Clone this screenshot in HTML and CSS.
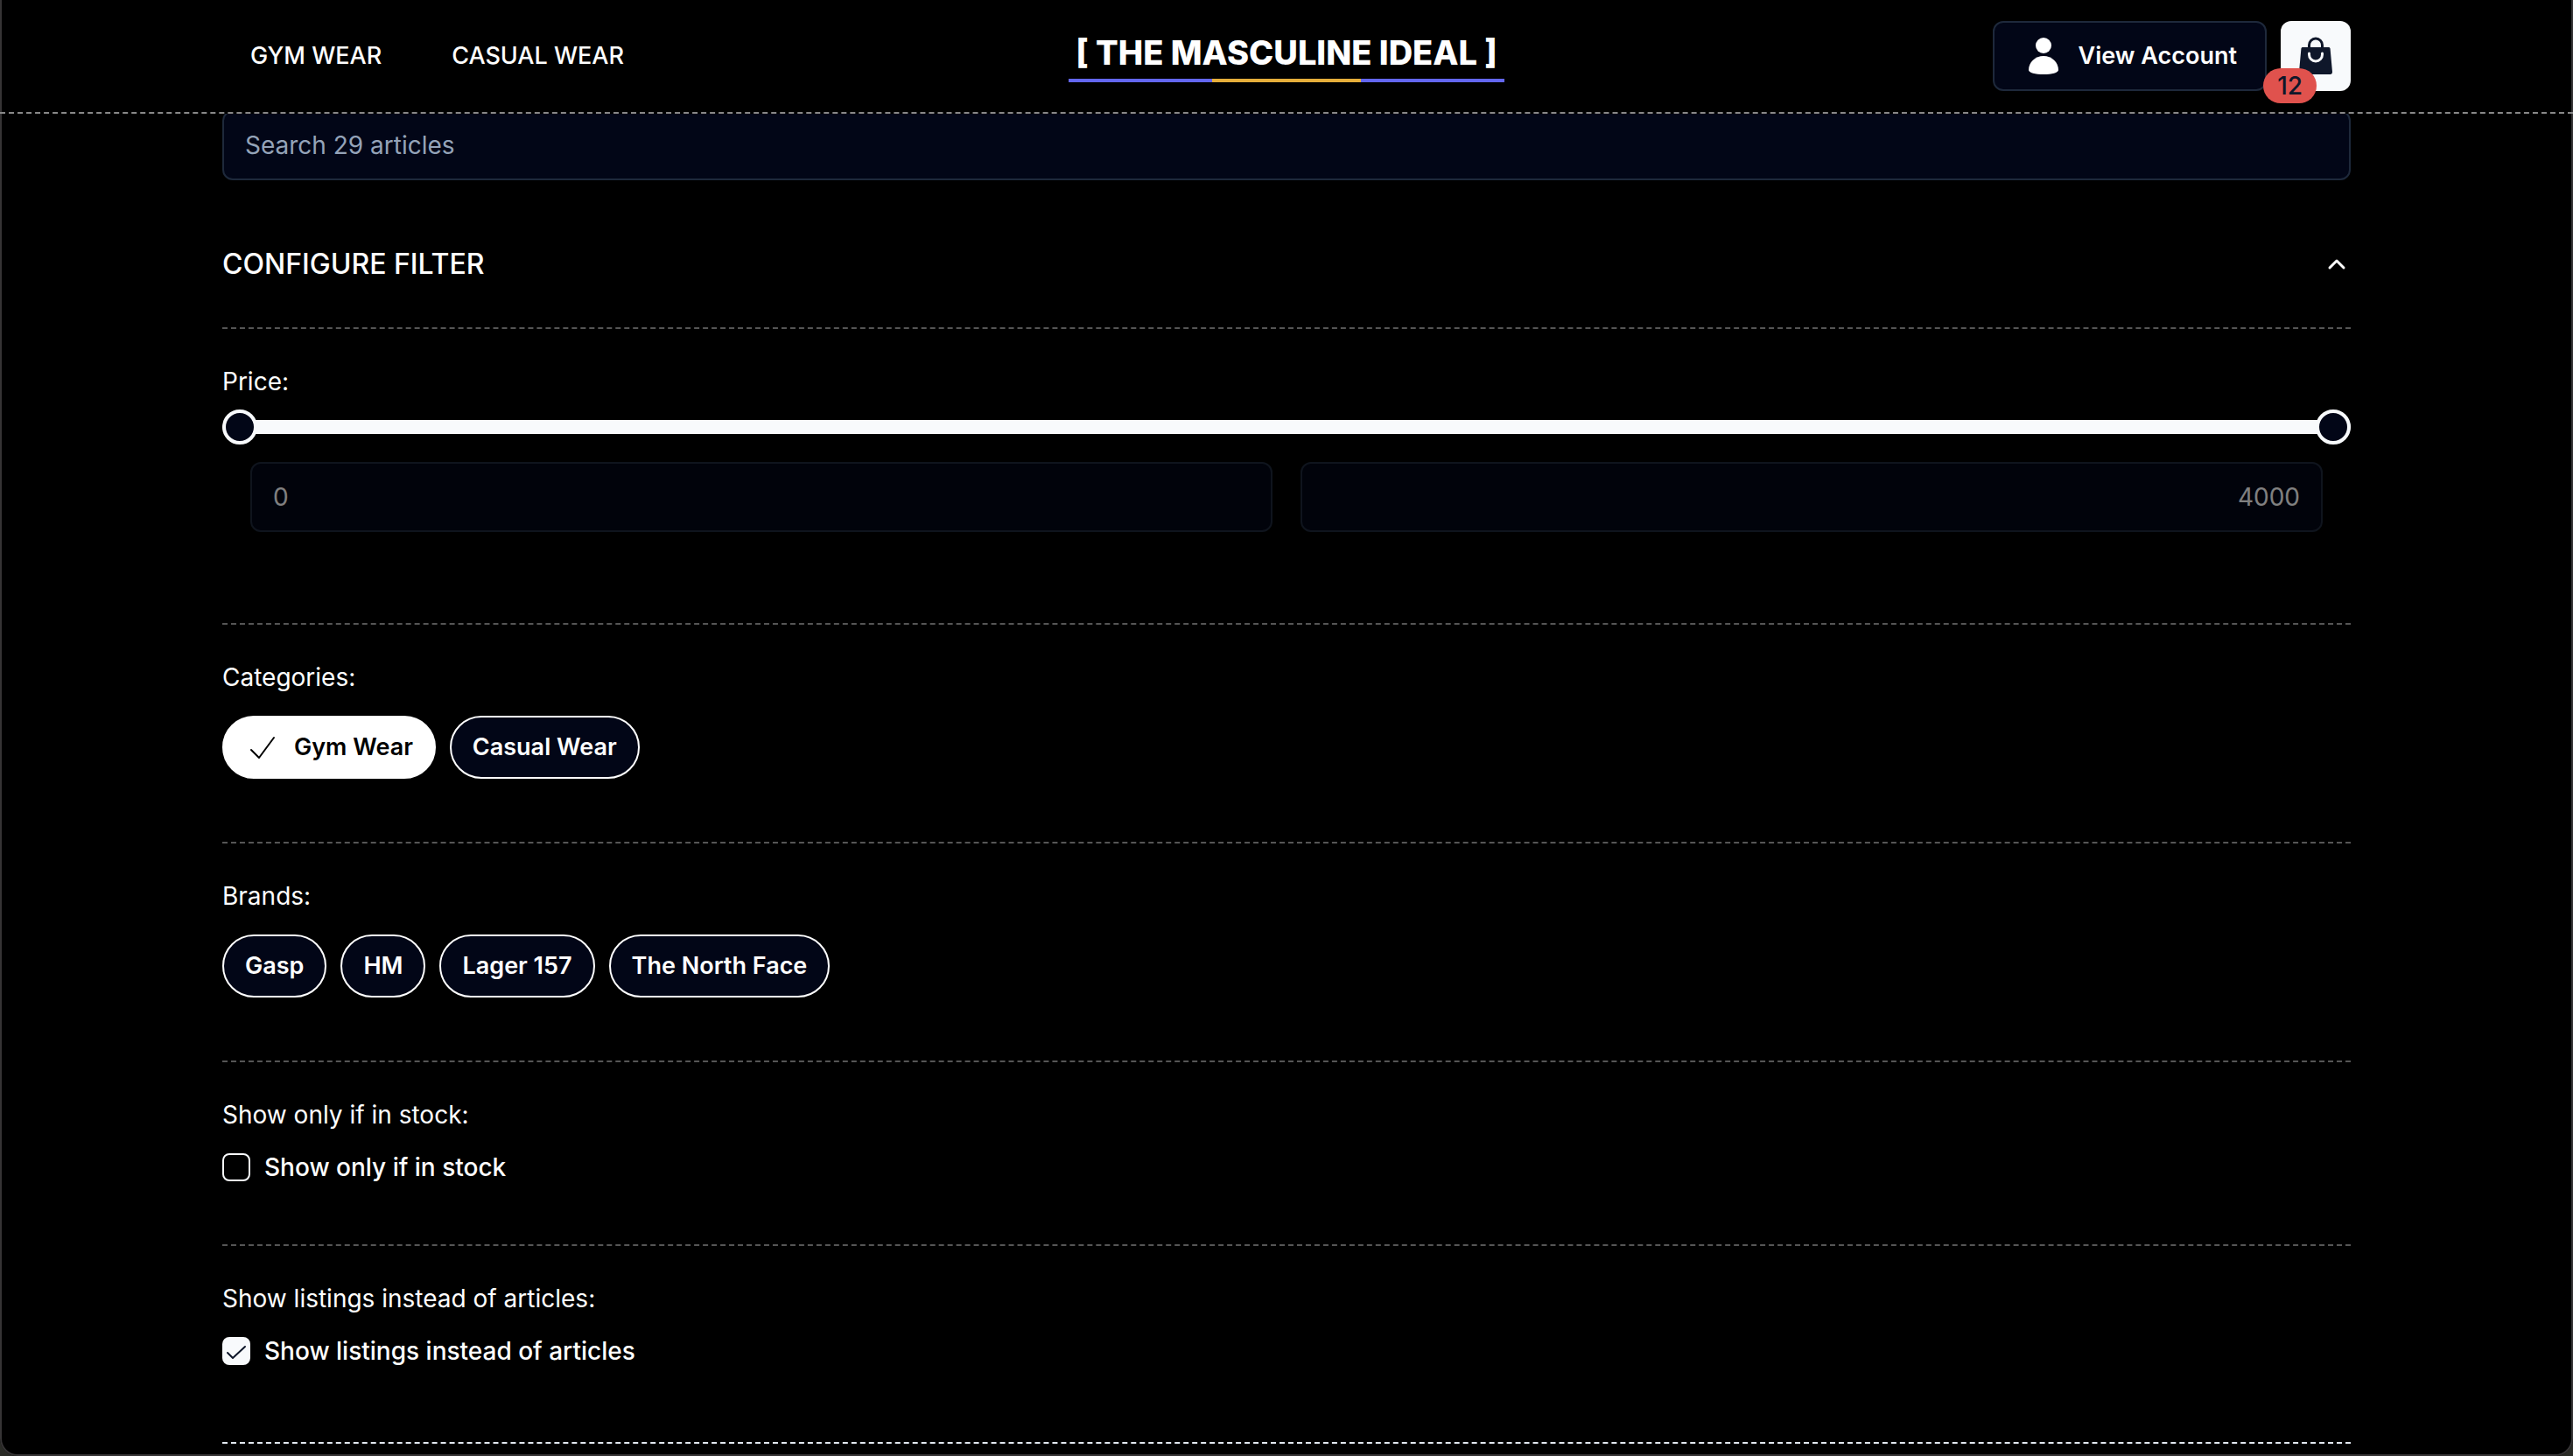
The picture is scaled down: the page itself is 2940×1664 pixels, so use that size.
FILE: index.html
```html
<!DOCTYPE html>
<html lang="en">
<head>
<meta charset="utf-8">
<meta name="viewport" content="width=device-width, initial-scale=1">
<title>The Masculine Ideal</title>
<link rel="stylesheet" href="styles.css">
</head>
<body>
<header class="site-header">
  <div class="container header-row">
    <nav class="nav">
      <a href="#gym">GYM WEAR</a>
      <a href="#casual">CASUAL WEAR</a>
    </nav>
    <a class="brand" href="#home">[ THE MASCULINE IDEAL ]</a>
    <div class="actions">
      <button class="account" type="button">
        <svg class="icon" viewBox="0 0 48 48" fill="currentColor" aria-hidden="true"><circle cx="24" cy="12" r="9"/><path d="M24 24c9.500 0 17 7.200 17 16 0 3-7.500 5-17 5S7 43 7 40c0-8.800 7.500-16 17-16z"/></svg>
        View Account
      </button>
      <button class="bag" type="button" aria-label="Shopping bag, 12 items">
        <svg class="icon" viewBox="0 0 48 48" fill="none" aria-hidden="true"><path d="M9.300 14h29.400c1 0 1.800.700 1.900 1.700L43 42c.1 1.700-.9 3-2.500 3h-33C5.900 45 4.900 43.700 5 42l2.400-26.300c.1-1 .9-1.700 1.900-1.700z" fill="currentColor"/><path d="M16.500 15v-3.500a7.500 7.500 0 0 1 15 0V15" stroke="currentColor" stroke-width="3"/><path d="M16.500 21v1.500a7.500 7.500 0 0 0 15 0V21" stroke="#f8fafc" stroke-width="3" stroke-linecap="round"/></svg>
        <span class="badge">12</span>
      </button>
    </div>
  </div>
</header>

<main class="container">
  <input class="field search" type="search" placeholder="Search 29 articles" aria-label="Search articles">

  <button class="filter-toggle" type="button" aria-expanded="true" aria-controls="filters">
    CONFIGURE FILTER
    <svg class="chevron" viewBox="0 0 32 32" fill="none" stroke="currentColor" stroke-width="3" stroke-linecap="round" stroke-linejoin="round" aria-hidden="true"><path d="M8 20l8-8 8 8"/></svg>
  </button>

  <div id="filters" class="filters">
    <section class="group group-price">
      <h2 class="label">Price:</h2>
      <div class="slider">
        <div class="track"></div>
        <input class="range" type="range" min="0" max="4000" value="0" aria-label="Minimum price">
        <input class="range" type="range" min="0" max="4000" value="4000" aria-label="Maximum price">
      </div>
      <div class="price-fields">
        <input class="field" type="text" value="0" aria-label="Minimum price value" disabled>
        <input class="field field-end" type="text" value="4000" aria-label="Maximum price value" disabled>
      </div>
    </section>

    <section class="group">
      <h2 class="label">Categories:</h2>
      <div class="chips">
        <button class="chip chip-on" type="button" aria-pressed="true">
          <svg class="chip-check" viewBox="0 0 40 40" fill="none" stroke="currentColor" stroke-width="2" stroke-linecap="round" stroke-linejoin="round" aria-hidden="true"><path d="M7 23l9 9L33 9"/></svg>
          Gym Wear
        </button>
        <button class="chip" type="button" aria-pressed="false">Casual Wear</button>
      </div>
    </section>

    <section class="group">
      <h2 class="label">Brands:</h2>
      <div class="chips">
        <button class="chip" type="button" aria-pressed="false">Gasp</button>
        <button class="chip" type="button" aria-pressed="false">HM</button>
        <button class="chip" type="button" aria-pressed="false">Lager 157</button>
        <button class="chip" type="button" aria-pressed="false">The North Face</button>
      </div>
    </section>

    <section class="group">
      <h2 class="label">Show only if in stock:</h2>
      <label class="check">
        <span class="tick"><input type="checkbox"><svg viewBox="0 0 32 32" fill="none" stroke="currentColor" stroke-width="2" stroke-linecap="round" stroke-linejoin="round" aria-hidden="true"><path d="M6 18l6 6 14-13"/></svg></span>
        Show only if in stock
      </label>
    </section>

    <section class="group">
      <h2 class="label">Show listings instead of articles:</h2>
      <label class="check">
        <span class="tick"><input type="checkbox" checked><svg viewBox="0 0 32 32" fill="none" stroke="currentColor" stroke-width="2" stroke-linecap="round" stroke-linejoin="round" aria-hidden="true"><path d="M6 18l6 6 14-13"/></svg></span>
        Show listings instead of articles
      </label>
    </section>
  </div>
</main>
</body>
</html>
```

FILE: styles.css
```css
* {
  box-sizing: border-box;
}

body {
  margin: 0;
  min-height: 100vh;
  background: #000;
  color: #fff;
  font-family: Inter, "Liberation Sans", sans-serif;
  font-size: 28px;
  line-height: 40px;
}

/* rounded outline of the app window */
body::after {
  content: "";
  position: fixed;
  inset: 0;
  border: 2px solid #363435;
  border-top: 0;
  border-radius: 0 0 20px 20px;
  box-shadow: 0 0 0 20px #2a2b26;
  pointer-events: none;
  z-index: 1;
}

button,
input {
  font: inherit;
  color: inherit;
  margin: 0;
}

button {
  cursor: pointer;
}

a {
  color: inherit;
  text-decoration: none;
}

.container {
  max-width: 2432px;
  margin: 0 auto;
}

.site-header {
  position: sticky;
  top: 0;
  z-index: 2;
  background: #000;
  border-bottom: 2px dashed #888;
  box-shadow: inset 2px 0 #363435, inset -2px 0 #363435;
}

.header-row {
  display: grid;
  grid-template-columns: 1fr auto 1fr;
  align-items: center;
  min-height: 128px;
}

.nav {
  display: flex;
  gap: 80px;
  padding-left: 32px;
  font-size: 27px;
  font-weight: 500;
}

.brand {
  padding: 6px 8px 10px;
  border-bottom: 4px solid;
  border-image: linear-gradient(90deg, #6366f1 33.300%, #e5ae3b 33.300% 66.700%, #6366f1 66.700%) 4;
  font-size: 38px;
  font-weight: 800;
}

.actions {
  display: flex;
  justify-content: flex-end;
  gap: 16px;
}

.icon {
  width: 48px;
  height: 48px;
}

.account {
  display: flex;
  align-items: center;
  gap: 16px;
  height: 80px;
  padding: 0 32px;
  border: 2px solid #1e293b;
  border-radius: 12px;
  background: #020617;
  font-size: 27px;
  font-weight: 600;
}

.bag {
  position: relative;
  display: grid;
  place-items: center;
  width: 80px;
  height: 80px;
  padding: 0;
  border: 0;
  border-radius: 12px;
  background: #f8fafc;
  color: #0f172a;
}

.badge {
  position: absolute;
  right: 39px;
  bottom: -14px;
  padding: 0 16px;
  border-radius: 20px;
  background: #e0524d;
  font-weight: 500;
}

.field {
  display: block;
  width: 100%;
  height: 80px;
  padding: 0 24px;
  border: 2px solid #1e293b;
  border-radius: 12px;
  background: #020617;
  appearance: none;
}

.field:disabled {
  opacity: 0.5;
}

.field-end {
  text-align: right;
}

.search {
  margin-top: -4px;
}

.search::placeholder {
  color: #94a3b8;
}

.filter-toggle {
  display: flex;
  align-items: center;
  justify-content: space-between;
  width: 100%;
  padding: 64px 0 40px;
  border: 0;
  background: none;
  font-size: 32px;
  font-weight: 500;
  line-height: 64px;
}

.chevron {
  width: 32px;
  height: 32px;
}

.filters {
  border-bottom: 2px dashed #e2e8f0;
  padding-bottom: 16px;
}

.group {
  padding: 40px 0 72px;
  border-top: 2px dashed #555;
}

.group-price {
  padding-bottom: 104px;
}

.label {
  margin: 0 0 24px;
  font-size: 28px;
  font-weight: 400;
}

.group-price .label {
  margin-bottom: 12px;
}

.slider {
  display: grid;
  align-items: center;
  height: 40px;
  margin-bottom: 20px;
}

.slider > * {
  grid-area: 1 / 1;
}

.track {
  height: 16px;
  border-radius: 8px;
  background: #f8fafc;
}

.range {
  width: 100%;
  height: 40px;
  appearance: none;
  background: none;
  pointer-events: none;
}

.range::-webkit-slider-thumb {
  box-sizing: border-box;
  width: 40px;
  height: 40px;
  border: 4px solid #f8fafc;
  border-radius: 50%;
  background: #020617;
  appearance: none;
  pointer-events: auto;
}

.price-fields {
  display: grid;
  grid-template-columns: 1fr 1fr;
  gap: 32px;
  padding: 0 32px;
}

.chips {
  display: flex;
  flex-wrap: wrap;
  gap: 16px;
}

.chip {
  display: flex;
  align-items: center;
  gap: 16px;
  height: 72px;
  padding: 0 24px;
  border: 2px solid #fff;
  border-radius: 36px;
  background: #020617;
  font-size: 27px;
  font-weight: 600;
}

.chip-on {
  background: #fff;
  color: #000;
}

.chip-check {
  width: 40px;
  height: 40px;
}

.check {
  display: flex;
  align-items: center;
  gap: 16px;
  width: fit-content;
  height: 32px;
  font-weight: 500;
}

.tick {
  display: grid;
  width: 32px;
  height: 32px;
}

.tick > * {
  grid-area: 1 / 1;
}

.tick input {
  width: 32px;
  height: 32px;
  border: 2px solid #f8fafc;
  border-radius: 8px;
  appearance: none;
}

.tick input:checked {
  background: #f8fafc;
}

.tick svg {
  width: 32px;
  height: 32px;
  color: #0f172a;
  visibility: hidden;
  pointer-events: none;
}

.tick input:checked + svg {
  visibility: visible;
}
```
